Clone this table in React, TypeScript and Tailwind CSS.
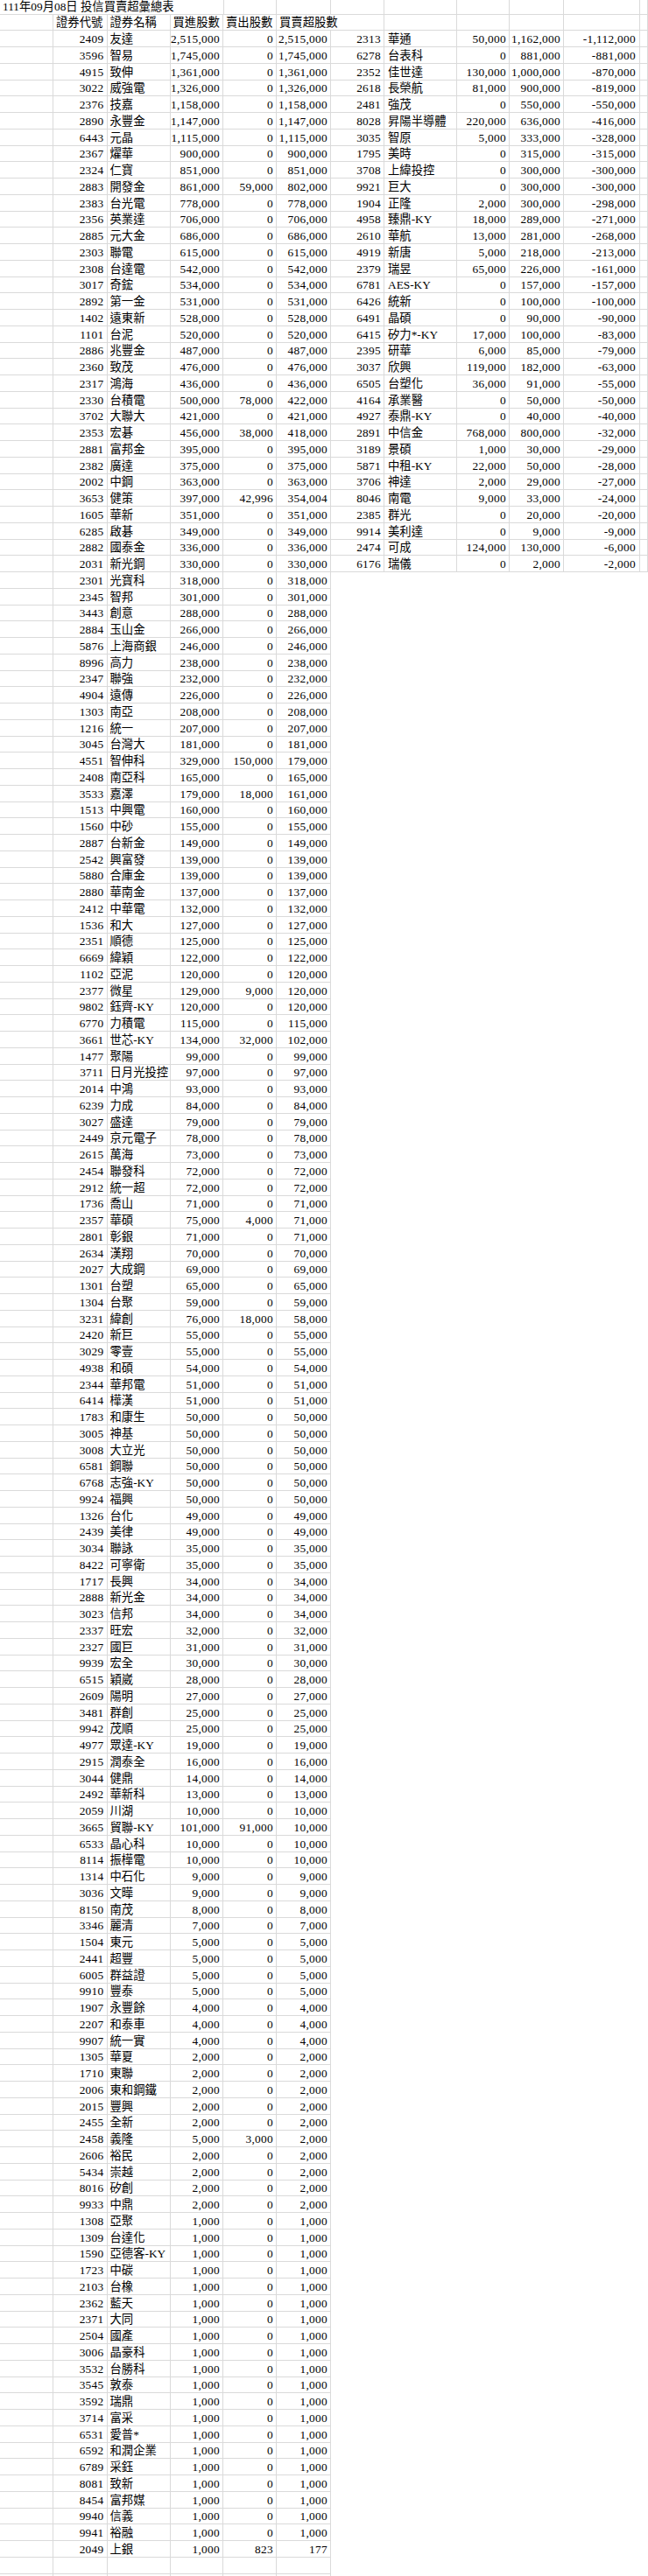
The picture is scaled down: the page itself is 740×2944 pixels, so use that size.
const LEFT_RAW = `2409 友達 2,515,000
3596 智易 1,745,000
4915 致伸 1,361,000
3022 威強電 1,326,000
2376 技嘉 1,158,000
2890 永豐金 1,147,000
6443 元晶 1,115,000
2367 燿華 900,000
2324 仁寶 851,000
2883 開發金 861,000 59,000 802,000
2383 台光電 778,000
2356 英業達 706,000
2885 元大金 686,000
2303 聯電 615,000
2308 台達電 542,000
3017 奇鋐 534,000
2892 第一金 531,000
1402 遠東新 528,000
1101 台泥 520,000
2886 兆豐金 487,000
2360 致茂 476,000
2317 鴻海 436,000
2330 台積電 500,000 78,000 422,000
3702 大聯大 421,000
2353 宏碁 456,000 38,000 418,000
2881 富邦金 395,000
2382 廣達 375,000
2002 中鋼 363,000
3653 健策 397,000 42,996 354,004
1605 華新 351,000
6285 啟碁 349,000
2882 國泰金 336,000
2031 新光鋼 330,000
2301 光寶科 318,000
2345 智邦 301,000
3443 創意 288,000
2884 玉山金 266,000
5876 上海商銀 246,000
8996 高力 238,000
2347 聯強 232,000
4904 遠傳 226,000
1303 南亞 208,000
1216 統一 207,000
3045 台灣大 181,000
4551 智伸科 329,000 150,000 179,000
2408 南亞科 165,000
3533 嘉澤 179,000 18,000 161,000
1513 中興電 160,000
1560 中砂 155,000
2887 台新金 149,000
2542 興富發 139,000
5880 合庫金 139,000
2880 華南金 137,000
2412 中華電 132,000
1536 和大 127,000
2351 順德 125,000
6669 緯穎 122,000
1102 亞泥 120,000
2377 微星 129,000 9,000 120,000
9802 鈺齊-KY 120,000
6770 力積電 115,000
3661 世芯-KY 134,000 32,000 102,000
1477 聚陽 99,000
3711 日月光投控 97,000
2014 中鴻 93,000
6239 力成 84,000
3027 盛達 79,000
2449 京元電子 78,000
2615 萬海 73,000
2454 聯發科 72,000
2912 統一超 72,000
1736 喬山 71,000
2357 華碩 75,000 4,000 71,000
2801 彰銀 71,000
2634 漢翔 70,000
2027 大成鋼 69,000
1301 台塑 65,000
1304 台聚 59,000
3231 緯創 76,000 18,000 58,000
2420 新巨 55,000
3029 零壹 55,000
4938 和碩 54,000
2344 華邦電 51,000
6414 樺漢 51,000
1783 和康生 50,000
3005 神基 50,000
3008 大立光 50,000
6581 鋼聯 50,000
6768 志強-KY 50,000
9924 福興 50,000
1326 台化 49,000
2439 美律 49,000
3034 聯詠 35,000
8422 可寧衛 35,000
1717 長興 34,000
2888 新光金 34,000
3023 信邦 34,000
2337 旺宏 32,000
2327 國巨 31,000
9939 宏全 30,000
6515 穎崴 28,000
2609 陽明 27,000
3481 群創 25,000
9942 茂順 25,000
4977 眾達-KY 19,000
2915 潤泰全 16,000
3044 健鼎 14,000
2492 華新科 13,000
2059 川湖 10,000
3665 貿聯-KY 101,000 91,000 10,000
6533 晶心科 10,000
8114 振樺電 10,000
1314 中石化 9,000
3036 文曄 9,000
8150 南茂 8,000
3346 麗清 7,000
1504 東元 5,000
2441 超豐 5,000
6005 群益證 5,000
9910 豐泰 5,000
1907 永豐餘 4,000
2207 和泰車 4,000
9907 統一實 4,000
1305 華夏 2,000
1710 東聯 2,000
2006 東和鋼鐵 2,000
2015 豐興 2,000
2455 全新 2,000
2458 義隆 5,000 3,000 2,000
2606 裕民 2,000
5434 崇越 2,000
8016 矽創 2,000
9933 中鼎 2,000
1308 亞聚 1,000
1309 台達化 1,000
1590 亞德客-KY 1,000
1723 中碳 1,000
2103 台橡 1,000
2362 藍天 1,000
2371 大同 1,000
2504 國產 1,000
3006 晶豪科 1,000
3532 台勝科 1,000
3545 敦泰 1,000
3592 瑞鼎 1,000
3714 富采 1,000
6531 愛普* 1,000
6592 和潤企業 1,000
6789 采鈺 1,000
8081 致新 1,000
8454 富邦媒 1,000
9940 信義 1,000
9941 裕融 1,000
2049 上銀 1,000 823 177`;

const RIGHT_RAW = `2313 華通 50,000 1,162,000 -1,112,000
6278 台表科 0 881,000 -881,000
2352 佳世達 130,000 1,000,000 -870,000
2618 長榮航 81,000 900,000 -819,000
2481 強茂 0 550,000 -550,000
8028 昇陽半導體 220,000 636,000 -416,000
3035 智原 5,000 333,000 -328,000
1795 美時 0 315,000 -315,000
3708 上緯投控 0 300,000 -300,000
9921 巨大 0 300,000 -300,000
1904 正隆 2,000 300,000 -298,000
4958 臻鼎-KY 18,000 289,000 -271,000
2610 華航 13,000 281,000 -268,000
4919 新唐 5,000 218,000 -213,000
2379 瑞昱 65,000 226,000 -161,000
6781 AES-KY 0 157,000 -157,000
6426 統新 0 100,000 -100,000
6491 晶碩 0 90,000 -90,000
6415 矽力*-KY 17,000 100,000 -83,000
2395 研華 6,000 85,000 -79,000
3037 欣興 119,000 182,000 -63,000
6505 台塑化 36,000 91,000 -55,000
4164 承業醫 0 50,000 -50,000
4927 泰鼎-KY 0 40,000 -40,000
2891 中信金 768,000 800,000 -32,000
3189 景碩 1,000 30,000 -29,000
5871 中租-KY 22,000 50,000 -28,000
3706 神達 2,000 29,000 -27,000
8046 南電 9,000 33,000 -24,000
2385 群光 0 20,000 -20,000
9914 美利達 0 9,000 -9,000
2474 可成 124,000 130,000 -6,000
6176 瑞儀 0 2,000 -2,000`;

// 3 fields = nothing sold, net equals buy
const parse = (raw: string) =>
  raw.split("\n").map((l) => {
    const p = l.trim().split(" ");
    return p.length === 3 ? [p[0], p[1], p[2], "0", p[2]] : p;
  });

const left = parse(LEFT_RAW);
const right = parse(RIGHT_RAW);

const cell =
  "shrink-0 h-full border-r border-b border-[#dadada] px-[3px] flex items-end whitespace-nowrap leading-[17px]";
const num = "justify-end tracking-[0.3px]";

function EmptyRow({ cols, tall }: { cols: string[]; tall?: boolean }) {
  return (
    <div className={tall ? "flex h-[16.5px]" : "flex h-[18.75px]"}>
      {cols.map((w, i) => (
        <div key={i} className={`${cell} ${w}`} />
      ))}
    </div>
  );
}

function LeftTable() {
  const w = ["w-[61px]", "w-[61.5px]", "w-[72px]", "w-[60.5px]", "w-[61px]", "w-[62px]"];
  return (
    <div className="w-[378px] shrink-0">
      <div className="flex h-[16.5px]">
        <div className={`${cell} w-[255px] border-r-0 justify-start overflow-visible`}>
          111年09月08日 投信買賣超彙總表
        </div>
        <div className={`${cell} w-[61px] border-l border-[#dadada]`} />
        <div className={`${cell} w-[62px]`} />
      </div>
      <div className="flex h-[18.75px]">
        <div className={`${cell} w-[61px]`} />
        <div className={`${cell} w-[61.5px] px-[2px]`}>證券代號</div>
        <div className={`${cell} w-[72px]`}>證券名稱</div>
        <div className={`${cell} w-[60.5px]`}>買進股數</div>
        <div className={`${cell} w-[61px]`}>賣出股數</div>
        <div className={`${cell} w-[62px] border-r-0 overflow-visible relative z-10`}>買賣超股數</div>
      </div>
      {left.map((r, i) => (
        <div key={i} className="flex h-[18.75px]">
          <div className={`${cell} ${w[0]}`} />
          <div className={`${cell} ${w[1]} ${num}`}>{r[0]}</div>
          <div className={`${cell} ${w[2]}`}>{r[1]}</div>
          <div className={`${cell} ${w[3]} ${num}`}>{r[2]}</div>
          <div className={`${cell} ${w[4]} ${num}`}>{r[3]}</div>
          <div className={`${cell} ${w[5]} ${num}`}>{r[4]}</div>
        </div>
      ))}
      <EmptyRow cols={w} />
      <EmptyRow cols={w} />
    </div>
  );
}

function RightTable() {
  const w = ["w-[61px]", "w-[83px]", "w-[60px]", "w-[62px]", "w-[87px]", "w-[9px]"];
  return (
    <div className="w-[362px] shrink-0">
      <EmptyRow cols={w} tall />
      <EmptyRow cols={w} />
      {right.map((r, i) => (
        <div key={i} className="flex h-[18.75px]">
          <div className={`${cell} ${w[0]} ${num} px-[2px]`}>{r[0]}</div>
          <div className={`${cell} ${w[1]} px-[4px]`}>{r[1]}</div>
          <div className={`${cell} ${w[2]} ${num} px-[2px]`}>{r[2]}</div>
          <div className={`${cell} ${w[3]} ${num}`}>{r[3]}</div>
          <div className={`${cell} ${w[4]} ${num} px-[4px]`}>{r[4]}</div>
          <div className={`${cell} ${w[5]}`} />
        </div>
      ))}
    </div>
  );
}

export default function App() {
  return (
    <div className="w-[740px] h-[2944px] overflow-hidden bg-white text-black text-[13.33px] font-['Liberation_Serif','Noto_Sans_CJK_TC',serif] flex items-start">
      <LeftTable />
      <RightTable />
    </div>
  );
}
